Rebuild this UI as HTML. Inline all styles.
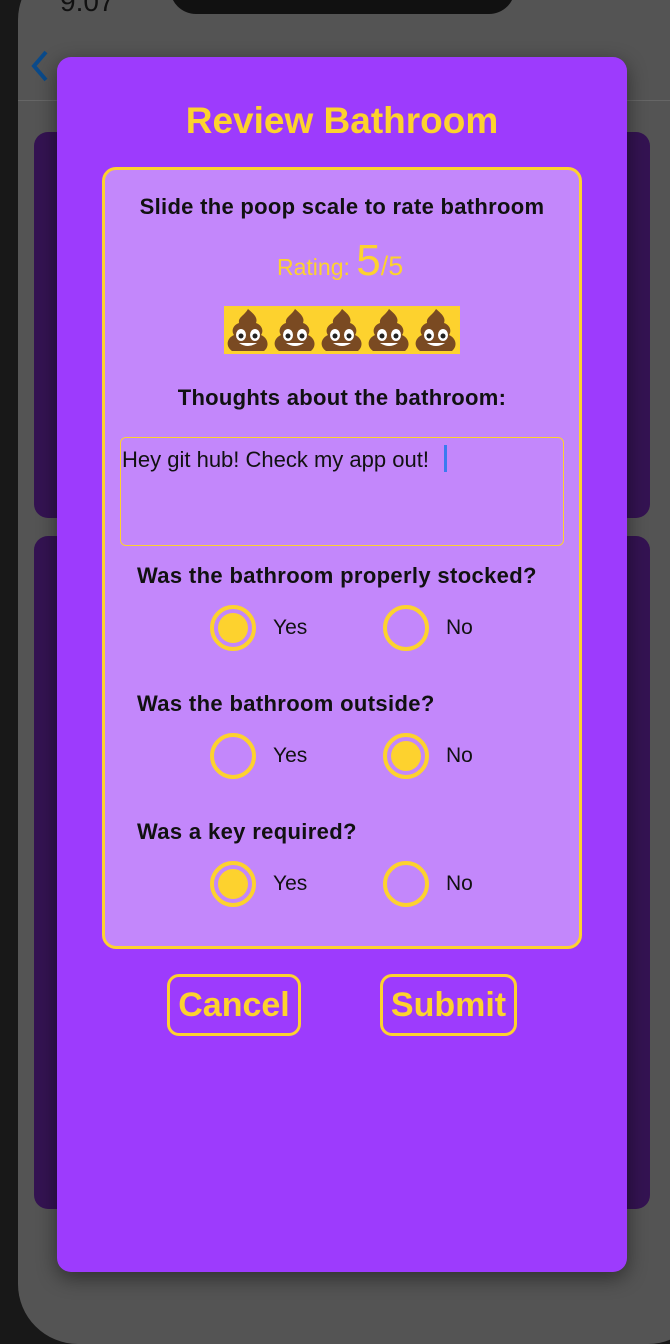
<!DOCTYPE html>
<html style="overflow:hidden;width:670px;height:1344px"><head><meta charset="utf-8"><style>
*{margin:0;padding:0;box-sizing:border-box}
body{width:670px;height:1344px;background:#181818;position:relative;overflow:hidden;font-family:"Liberation Sans",sans-serif}
.a{position:absolute}
.q{position:absolute;left:137px;font-weight:bold;font-size:22px;letter-spacing:0.35px;color:#111;line-height:24px}
.r{position:absolute;width:46px;height:46px;border:4px solid #fdd22e;border-radius:50%}
.r.on::after{content:"";position:absolute;left:4px;top:4px;width:30px;height:30px;border-radius:50%;background:#fdd22e}
.l{position:absolute;font-size:21px;color:#111;line-height:24px}
.b{position:absolute;top:974px;height:62px;border:3px solid #fdd22e;border-radius:12px;color:#fdd22e;font-weight:bold;font-size:34px;text-align:center;line-height:56px}
</style></head><body>
<div class="a" style="left:18px;top:-40px;width:690px;height:1384px;background:#545454;border-radius:60px;overflow:hidden"></div>
<div class="a" style="left:18px;top:100px;width:652px;height:1px;background:#666"></div>
<div class="a" style="left:60px;top:-14px;font-size:28px;color:#111">9:07</div>
<div class="a" style="left:170px;top:-20px;width:345px;height:34px;background:#111;border-radius:0 0 26px 26px"></div>
<svg class="a" style="left:28px;top:48px" width="24" height="36"><path d="M18 4 L6 18 L18 32" stroke="#0a4a8a" stroke-width="4" fill="none"/></svg>
<div class="a" style="left:34px;top:132px;width:616px;height:386px;background:#341352;border-radius:14px"></div>
<div class="a" style="left:34px;top:536px;width:616px;height:673px;background:#341352;border-radius:14px"></div>
<div class="a" style="left:57px;top:57px;width:570px;height:1215px;background:#9d3bfd;border-radius:14px;box-shadow:0 6px 20px rgba(0,0,0,.45)"></div>
<div class="a" style="left:57px;top:98px;width:570px;text-align:center;font-size:37px;font-weight:bold;color:#fdd22e;line-height:46px">Review Bathroom</div>
<div class="a" style="left:102px;top:167px;width:480px;height:782px;background:#c387fb;border:3px solid #fdd22e;border-radius:14px"></div>
<div class="a" style="left:102px;top:194px;width:480px;text-align:center;font-size:22px;letter-spacing:0.3px;font-weight:bold;color:#111">Slide the poop scale to rate bathroom</div>
<div class="a" style="left:277px;top:238px;color:#fdd22e;white-space:nowrap;line-height:46px"><span style="font-size:23px">Rating: </span><span style="font-size:44px">5</span><span style="font-size:27px">/5</span></div>
<div class="a" style="left:224px;top:306px;width:236px;height:48px;background:#fdd22e"></div>
<svg class="a" style="left:224px;top:306px" width="236" height="48">
<defs><g id="p"><path d="M24 3 C30 8 34 12 32 17 C38 19 40 25 37 29 C44 32 46 40 40 45 L8 45 C1 40 3 32 10 29 C7 25 9 19 15 17 C14 11 20 10 24 3Z" fill="#7a4a22"/><ellipse cx="17" cy="29" rx="5" ry="6" fill="#fff"/><ellipse cx="31" cy="29" rx="5" ry="6" fill="#fff"/><circle cx="17" cy="30" r="2.5" fill="#222"/><circle cx="31" cy="30" r="2.5" fill="#222"/><path d="M15 37 Q24 43 33 37Z" fill="#fff"/></g></defs>
<use href="#p" x="0"/><use href="#p" x="47"/><use href="#p" x="94"/><use href="#p" x="141"/><use href="#p" x="188"/></svg>
<div class="a" style="left:102px;top:385px;width:480px;text-align:center;font-size:22px;letter-spacing:0.3px;font-weight:bold;color:#111">Thoughts about the bathroom:</div>
<div class="a" style="left:120px;top:437px;width:444px;height:109px;border:1.5px solid #fdd22e;border-radius:6px"></div>
<div class="a" style="left:122px;top:447px;font-size:22px;color:#111">Hey git hub! Check my app out!</div>
<div class="a" style="left:444px;top:445px;width:3px;height:27px;background:#3a7bf0"></div>
<div class="q" style="top:564px">Was the bathroom properly stocked?</div>
<div class="r on" style="left:210px;top:605px"></div><div class="l" style="left:273px;top:616px">Yes</div>
<div class="r" style="left:383px;top:605px"></div><div class="l" style="left:446px;top:616px">No</div>
<div class="q" style="top:692px">Was the bathroom outside?</div>
<div class="r" style="left:210px;top:733px"></div><div class="l" style="left:273px;top:744px">Yes</div>
<div class="r on" style="left:383px;top:733px"></div><div class="l" style="left:446px;top:744px">No</div>
<div class="q" style="top:820px">Was a key required?</div>
<div class="r on" style="left:210px;top:861px"></div><div class="l" style="left:273px;top:872px">Yes</div>
<div class="r" style="left:383px;top:861px"></div><div class="l" style="left:446px;top:872px">No</div>
<div class="b" style="left:167px;width:134px">Cancel</div>
<div class="b" style="left:380px;width:137px">Submit</div>
</body></html>
